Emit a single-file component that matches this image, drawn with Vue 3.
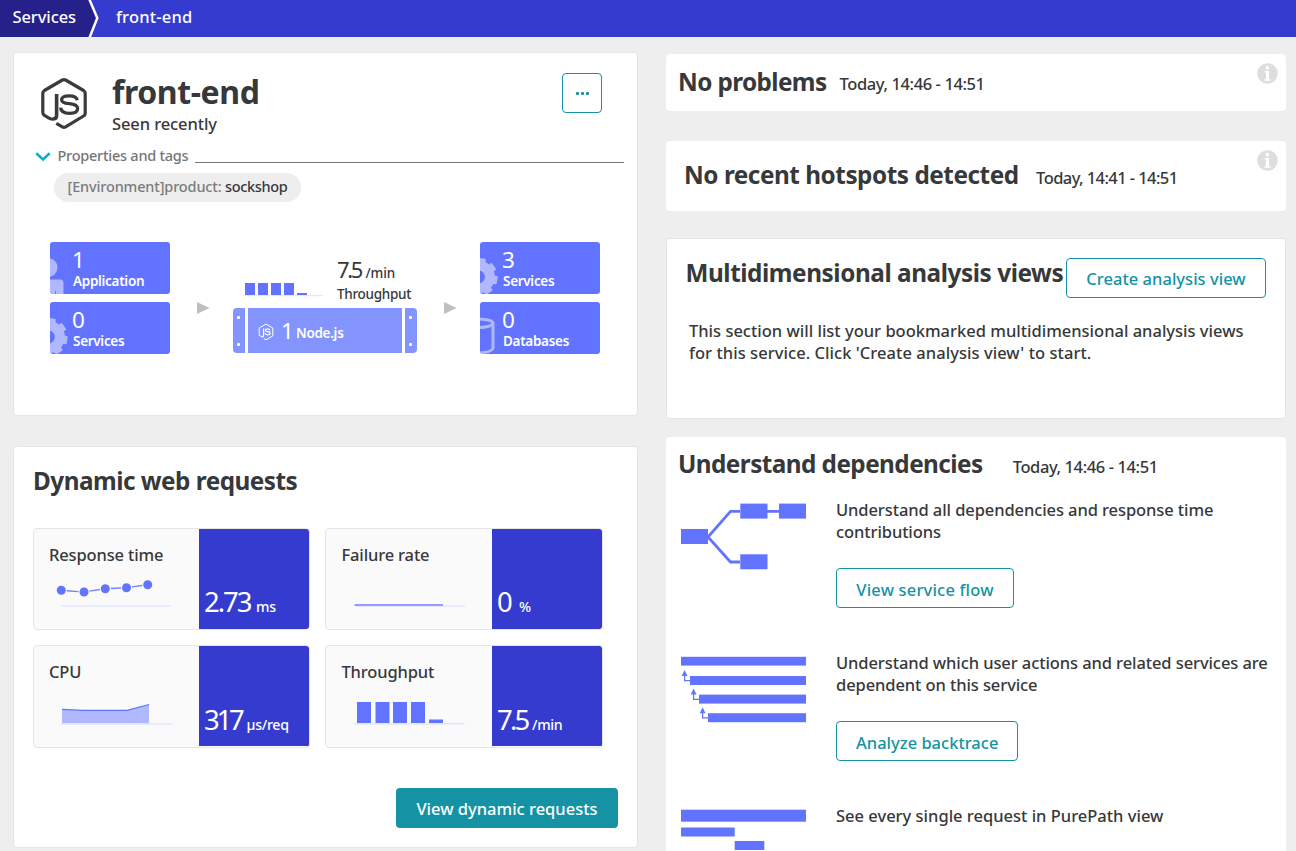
<script setup>
const inbound = [
  { count: '1', label: 'Application', icon: 'user' },
  { count: '0', label: 'Services', icon: 'gear' },
]
const outbound = [
  { count: '3', label: 'Services', icon: 'gear' },
  { count: '0', label: 'Databases', icon: 'database' },
]
const tiles = [
  { label: 'Response time', value: '2.73', unit: 'ms', chart: 'line' },
  { label: 'Failure rate', value: '0', unit: '%', chart: 'flat' },
  { label: 'CPU', value: '317', unit: 'µs/req', chart: 'area' },
  { label: 'Throughput', value: '7.5', unit: '/min', chart: 'bars' },
]
const points = [[28.3, 23.3], [51, 25], [72.3, 21.7], [93.5, 20.7], [114.7, 17.7]]
const segments = points.slice(1).map((p, i) => {
  const q = points[i]
  const dx = p[0] - q[0]
  const dy = p[1] - q[1]
  const k = 5.5 / Math.hypot(dx, dy)
  return { x1: q[0] + dx * k, y1: q[1] + dy * k, x2: p[0] - dx * k, y2: p[1] - dy * k }
})
const gearTeeth = [0, 45, 90, 135, 180, 225, 270, 315]
</script>

<template>
  <div class="page">
    <header class="crumbs">
      <a class="crumb first">Services</a>
      <svg class="chevron" width="12" height="37" viewBox="0 0 12 37">
        <path d="M0 0H1.5L9.5 18.5L2 37H0Z" fill="#25208a" />
        <path d="M1.2 -1L9.3 18L1.4 38" fill="none" stroke="#fff" stroke-width="2.5" />
      </svg>
      <a class="crumb">front-end</a>
    </header>

    <main class="columns">
      <div class="left">
        <section class="card overview">
          <div class="head">
            <svg class="node" width="50" height="56" viewBox="0 0 50 56">
              <g fill="none" stroke="#3b3b3d" stroke-linejoin="round">
                <path d="M15.2 43.6Q12.6 44.7 10 43.2L5.4 40.4Q3.8 39.3 3.8 37.5V18.3Q3.8 16.5 5.4 15.5L23.4 5Q25 4.1 26.6 5L44.6 15.5Q46.2 16.5 46.2 18.3V38.2Q46.2 40 44.6 41L26.6 51.9Q25 52.8 23.4 51.9L17.3 48.3" stroke-width="3.2" />
                <path d="M17.6 19V40.5Q17.6 43.9 14.2 43.9" stroke-width="3.6" />
                <path d="M38.2 25.2Q37.6 20.8 30.2 20.8Q22.6 20.8 22.6 24.8Q22.6 28 30.3 28.7Q38.6 29.4 38.6 33.7Q38.6 38.3 30.6 38.3Q22 38.3 21.6 32.6" stroke-width="3.3" />
              </g>
            </svg>
            <div class="names">
              <h1>front-end</h1>
              <p>Seen recently</p>
            </div>
            <button class="more" aria-label="More"><i></i><i></i><i></i></button>
          </div>
          <div class="props">
            <svg width="16" height="10" viewBox="0 0 16 10"><path d="M1.3 1.3L8 7.5L14.7 1.3" fill="none" stroke="#14aec2" stroke-width="2.6" /></svg>
            <span>Properties and tags</span>
            <hr />
          </div>
          <div class="tag"><span class="key">[Environment]product:</span><span class="val">sockshop</span></div>

          <div class="flow">
            <template v-for="(group, g) in [inbound, outbound]" :key="g">
              <div class="stack">
                <div v-for="b in group" :key="b.label" class="box">
                  <svg width="23" height="52" viewBox="0 0 23 52">
                    <g v-if="b.icon === 'user'" fill="#b0b8ff">
                      <circle cx="-2" cy="25.5" r="9.5" />
                      <path d="M0 37.5H10Q13.5 37.5 13.5 41V52H0Z" />
                      <rect x="5" y="49" width="1" height="3" fill="#6173ff" />
                    </g>
                    <g v-else-if="b.icon === 'gear'" transform="translate(-1.5 35)">
                      <circle r="11.4" fill="none" stroke="#b0b8ff" stroke-width="10" />
                      <rect v-for="a in gearTeeth" :key="a" x="-4.2" y="-19" width="8.4" height="7" rx="1" fill="#b0b8ff" :transform="`rotate(${a + 10})`" />
                    </g>
                    <g v-else fill="none" stroke="#b0b8ff" stroke-width="3">
                      <ellipse cx="-2" cy="21.2" rx="15" ry="4.3" />
                      <path d="M13 21V46Q12 50 0 51" />
                    </g>
                  </svg>
                  <div class="boxtext"><b>{{ b.count }}</b><span>{{ b.label }}</span></div>
                </div>
              </div>
              <template v-if="g === 0">
                <svg class="arrow" width="63" height="12" viewBox="0 0 63 12"><path d="M27 0L39.6 6L27 12Z" fill="#bfbfbf" /></svg>
                <div class="middle">
                  <div class="rate">
                    <svg width="104" height="20" viewBox="0 0 104 20">
                      <rect x="10" y="15" width="80" height="1.2" fill="#e3e6ff" />
                      <rect v-for="x in [12, 25, 38, 51]" :key="x" :x="x" y="3" width="10" height="12" fill="#6173ff" />
                      <rect x="64" y="13" width="10" height="2" fill="#6173ff" />
                    </svg>
                    <div class="ratetext">
                      <div class="num"><b>7.5</b><span>/min</span></div>
                      <div class="cap">Throughput</div>
                    </div>
                  </div>
                  <div class="server">
                    <div class="ear"><i></i><i></i></div>
                    <div class="body">
                      <svg width="16" height="18" viewBox="0 0 16 18" fill="none" stroke="#fff">
                        <path d="M5 14.2L1.2 12.3V5L8 1.1L14.8 5V12.9L8 16.8L5.8 15.6" stroke-width="1" />
                        <path d="M5.6 5.5V12.3Q5.6 13.6 4.4 13.7M12 7.3Q11.6 5.8 9.6 5.8Q7.4 5.8 7.4 7.2Q7.4 8.4 9.7 8.7Q12.2 9 12.2 10.3Q12.2 11.8 9.7 11.8Q7.4 11.8 7.1 10" stroke-width="1.2" />
                      </svg>
                      <b>1</b><span>Node.js</span>
                    </div>
                    <div class="ear right"><i></i><i></i></div>
                  </div>
                </div>
                <svg class="arrow" width="63" height="12" viewBox="0 0 63 12"><path d="M27 0L39.6 6L27 12Z" fill="#bfbfbf" /></svg>
              </template>
            </template>
          </div>
        </section>

        <section class="card requests">
          <h2>Dynamic web requests</h2>
          <div class="tiles">
            <div v-for="t in tiles" :key="t.label" class="tile">
              <div class="metric">
                <div class="label">{{ t.label }}</div>
                <svg width="165" height="50" viewBox="0 0 165 50">
                  <template v-if="t.chart === 'line'">
                    <rect x="28" y="38.5" width="110" height="1.2" fill="#dfe2fb" />
                    <line v-for="(s, i) in segments" :key="i" v-bind="s" stroke="#7484ff" stroke-width="1.4" />
                    <circle v-for="p in points" :key="p[0]" :cx="p[0]" :cy="p[1]" r="4.5" fill="#6173ff" />
                  </template>
                  <template v-else-if="t.chart === 'flat'">
                    <rect x="28.5" y="38.5" width="110.5" height="1.2" fill="#dfe2fb" />
                    <rect x="28.5" y="37" width="88.5" height="2" fill="#929eff" />
                  </template>
                  <template v-else-if="t.chart === 'area'">
                    <rect x="28" y="39.3" width="111" height="1.6" fill="#e6e8fb" />
                    <path d="M29 25.4L50 26.3H94L116 20.5V39.3H29Z" fill="#b0b8ff" />
                    <path d="M29 25.4L50 26.3H94L116 20.5" fill="none" stroke="#6173ff" stroke-width="1.2" />
                  </template>
                  <template v-else>
                    <rect x="28.5" y="39" width="110" height="1.6" fill="#e3e6fb" />
                    <rect v-for="x in [31, 49.5, 67, 85]" :key="x" :x="x" y="18" width="14" height="21" fill="#6173ff" />
                    <rect x="103" y="35.5" width="14" height="3.5" fill="#6173ff" />
                  </template>
                </svg>
              </div>
              <div class="value"><b :class="t.chart">{{ t.value }}</b><span>{{ t.unit }}</span></div>
            </div>
          </div>
          <button class="primary">View dynamic requests</button>
        </section>
      </div>

      <div class="right-col">
        <section class="card plain problems">
          <h2>No problems</h2><time>Today, 14:46 - 14:51</time>
          <svg class="info" width="21" height="21" viewBox="0 0 21 21"><circle cx="10.5" cy="10.5" r="10.3" fill="#dedede" /><circle cx="10.3" cy="4.7" r="1.9" fill="#fff" /><path d="M7.6 8H12V16.3H13.6V17.8H7.4V16.3H9V9.5H7.6Z" fill="#fff" /></svg>
        </section>
        <section class="card plain hotspots">
          <h2>No recent hotspots detected</h2><time>Today, 14:41 - 14:51</time>
          <svg class="info" width="21" height="21" viewBox="0 0 21 21"><circle cx="10.5" cy="10.5" r="10.3" fill="#dedede" /><circle cx="10.3" cy="4.7" r="1.9" fill="#fff" /><path d="M7.6 8H12V16.3H13.6V17.8H7.4V16.3H9V9.5H7.6Z" fill="#fff" /></svg>
        </section>
        <section class="card analysis">
          <div class="row">
            <h2>Multidimensional analysis views</h2>
            <button class="outline">Create analysis view</button>
          </div>
          <p>This section will list your bookmarked multidimensional analysis views<br /><span>for this service. Click 'Create analysis view' to start.</span></p>
        </section>
        <section class="card plain deps">
          <div class="row">
            <h2>Understand dependencies</h2><time>Today, 14:46 - 14:51</time>
          </div>
          <div class="item">
            <svg width="125" height="72" viewBox="681 500 125 72" fill="#6173ff">
              <path d="M740 511.3H730.5L708 537L730.5 562H740M767 511.3H780" fill="none" stroke="#6173ff" stroke-width="2.8" />
              <rect x="681" y="529" width="27" height="15" />
              <rect x="740.3" y="503.6" width="27.2" height="15" />
              <rect x="779" y="503.6" width="27" height="15" />
              <rect x="740.3" y="554.3" width="27.2" height="15" />
            </svg>
            <div>
              <p>Understand all dependencies and response time<br />contributions</p>
              <button class="outline flowbtn">View service flow</button>
            </div>
          </div>
          <div class="item">
            <svg width="125" height="72" viewBox="681 653 125 72" fill="#6173ff">
              <rect x="681" y="656.8" width="125" height="8.8" />
              <rect x="690" y="676" width="116" height="9" />
              <rect x="699" y="694.6" width="107" height="9" />
              <rect x="708" y="713.2" width="98" height="9" />
              <g v-for="k in [0, 1, 2]" :key="k" :transform="`translate(${k * 9} ${k * 18.6})`">
                <path d="M684.6 670L681.7 676H687.5Z" />
                <path d="M684.6 675V680.7H690" fill="none" stroke="#6173ff" stroke-width="1.2" />
              </g>
            </svg>
            <div>
              <p>Understand which user actions and related services are<br />dependent on this service</p>
              <button class="outline">Analyze backtrace</button>
            </div>
          </div>
          <div class="item">
            <svg width="125" height="72" viewBox="681 806 125 72" fill="#6173ff">
              <rect x="681" y="809.7" width="125" height="12" />
              <rect x="681" y="827.5" width="53.7" height="9" />
              <rect x="734.7" y="841" width="29.6" height="9" />
            </svg>
            <div><p class="wide">See every single request in PurePath view</p></div>
          </div>
        </section>
      </div>
    </main>
  </div>
</template>

<style>
body { background: #eee; }
</style>
<style scoped>
* { box-sizing: border-box; margin: 0; padding: 0; }
svg { display: block; flex: none; }
.page { height: 851px; overflow: hidden; background: #eee; color: #37383a; font: 500 16.5px/22px "Noto Sans", sans-serif; white-space: nowrap; }
.crumbs { height: 37px; display: flex; background: #363bcf; color: #fff; line-height: 33px; letter-spacing: .2px; }
.first { width: 88px; padding-left: 12.5px; background: #25208a; letter-spacing: -.1px; }
.chevron { margin-right: 16px; }
.columns { display: grid; grid-template-columns: 625px 620px; column-gap: 28px; padding: 15px 0 0 13px; align-items: start; }
.left, .right-col { display: flex; flex-direction: column; }
.card { background: #fff; border: 1px solid #e5e5e5; border-radius: 4px; }
.plain { border: 0; }
.overview { height: 364px; margin-bottom: 30px; }
.requests { height: 402px; }
h1 { font-size: 32px; line-height: 42px; letter-spacing: -.4px; font-weight: 700; }
h2 { font-size: 24.3px; line-height: 32px; letter-spacing: -.5px; font-weight: 700; }
.head { display: flex; padding: 18px 35px 0 25px; height: 92px; }
.node { margin-top: 4px; }
.names { margin-left: 23px; flex: 1; letter-spacing: -.1px; }
button { font: inherit; }
.more { width: 40px; height: 40px; margin-top: 2px; border: 1px solid #1592a3; border-radius: 4px; background: #fff; display: flex; justify-content: center; align-items: center; gap: 2px; }
.more i { width: 3px; height: 3px; border-radius: 1px; background: #1592a3; }
.props { display: flex; align-items: center; height: 20px; padding: 0 13px 0 21px; color: #757679; font-size: 14.5px; letter-spacing: -.25px; line-height: 20px; }
.props span { margin: 0 6.5px 0 6.5px; }
.props svg { margin-top: 3px; }
.props hr { flex: 1; height: 1px; border: 0; background: #757679; margin-top: 15px; }
.tag { display: flex; width: 247px; height: 29px; margin: 8px 0 0 40px; padding-left: 13.5px; border-radius: 15px; background: #eee; font-size: 14.5px; line-height: 27px; }
.key { color: #7a7b7d; letter-spacing: -.15px; width: 157.5px; }
.val { letter-spacing: -.35px; }
.flow { display: flex; margin: 40px 0 0 36px; height: 112px; }
.stack { display: flex; flex-direction: column; gap: 8px; width: 120px; }
.box { height: 52px; border-radius: 3px; background: #6173ff; color: #fff; display: flex; overflow: hidden; }
.boxtext { padding-top: 5px; }
.boxtext b { display: block; font-size: 22.5px; font-weight: 400; line-height: 26px; margin-left: -1px; }
.boxtext span { display: block; font-size: 13.5px; font-weight: 600; line-height: 16px; letter-spacing: -.3px; }
.arrow { margin-top: 60px; }
.middle { width: 184px; }
.rate { display: flex; height: 66px; padding-top: 14px; }
.rate svg { margin-top: 24px; }
.ratetext { font-size: 13.5px; letter-spacing: -.3px; margin-top: -1px; }
.ratetext b { font-size: 22px; font-weight: 400; line-height: 28px; letter-spacing: -2.4px; display: inline-block; width: 28.5px; }
.ratetext .cap { line-height: 20px; }
.ratetext span { letter-spacing: -.1px; }
.server { display: flex; height: 45px; gap: 3px; border-radius: 4px; overflow: hidden; }
.ear { width: 12px; background: #8494ff; display: flex; flex-direction: column; justify-content: space-between; padding: 8px 0 7px 4px; }
.ear i { width: 3px; height: 3px; background: #fff; border-radius: 1px; }
.body { flex: 1; background: #8494ff; color: #fff; display: flex; padding-left: 10px; font-size: 13.5px; font-weight: 600; line-height: 50px; letter-spacing: -.3px; }
.body svg { margin-top: 15px; }
.body b { font-size: 22.5px; font-weight: 400; line-height: 45px; width: 15px; margin-left: 7px; }
.requests h2 { margin: 18px 0 0 19px; }
.tiles { display: grid; grid-template-columns: 277px 278px; grid-template-rows: 102px 103px; gap: 15px; margin: 31px 0 0 19px; }
.tile { display: flex; border: 1px solid #e5e5e5; border-radius: 4px; background: #fafafa; overflow: hidden; }
.metric { width: 165px; padding-top: 15px; }
.tile:nth-child(even) .metric { width: 166px; padding-left: .5px; }
.label { padding-left: 15px; letter-spacing: -.15px; }
.metric svg { margin: 1px 0 0 -1px; }
.value { flex: 1; height: 100px; background: #363bcf; color: #fff; padding: 55px 0 0 5px; line-height: 36px; }
.tile:nth-child(n + 3) .value { padding-top: 56px; }
.value b { display: inline-block; font-size: 27.5px; font-weight: 400; letter-spacing: -2px; width: 52px; }
.value b.flat { width: 22px; }
.value b.area { letter-spacing: -3.2px; width: 42.5px; }
.value b.bars { letter-spacing: -2.8px; width: 35px; }
.value span { font-size: 14.2px; letter-spacing: -.3px; }
.primary { display: block; width: 222px; height: 40px; margin: 40px 0 0 382px; border: 0; border-radius: 4px; background: #1592a3; color: #fff; padding-top: 1px; }
.plain { position: relative; }
.problems { height: 57px; margin: 2px 0 30px; display: flex; padding: 12px 0 0 12px; }
.problems h2 { letter-spacing: -.6px; }
.hotspots { height: 70px; margin-bottom: 27px; display: flex; padding: 18px 0 0 18px; }
.info { position: absolute; right: 8.5px; top: 8.5px; }
time { font-weight: 500; letter-spacing: -.4px; line-height: 35px; margin-left: 13px; }
.hotspots time { margin-left: 17.5px; line-height: 37px; letter-spacing: -.58px; }
.hotspots h2 { letter-spacing: -.46px; }
.analysis { width: 620px; height: 181px; margin-bottom: 18px; padding: 19px 19px 0 18.5px; }
.row { display: flex; }
.analysis h2 { width: 380.5px; letter-spacing: -.43px; line-height: 30px; }
.outline { height: 40px; padding: 0 19px 0 19px; border: 1px solid #1592a3; border-radius: 4px; background: #fff; color: #1592a3; }
.analysis .outline { width: 200px; letter-spacing: .02px; padding: 1px 0 0; }
.analysis p { margin: 22px 0 0 3.5px; }
.analysis p span { letter-spacing: .05px; }
.deps { height: 440px; padding: 11px 0 0 12px; }
.deps h2 { letter-spacing: -.55px; }
.deps time { margin-left: 30px; line-height: 38px; }
.deps .row { height: 52px; }
.item { display: flex; height: 153px; gap: 30px; padding-left: 3px; }
.item p { margin-top: -1px; letter-spacing: -.09px; }
.item p.wide { letter-spacing: 0; }
.item .outline { margin-top: 25px; padding-top: 3px; }
.item .flowbtn { width: 178px; letter-spacing: .18px; }
</style>
